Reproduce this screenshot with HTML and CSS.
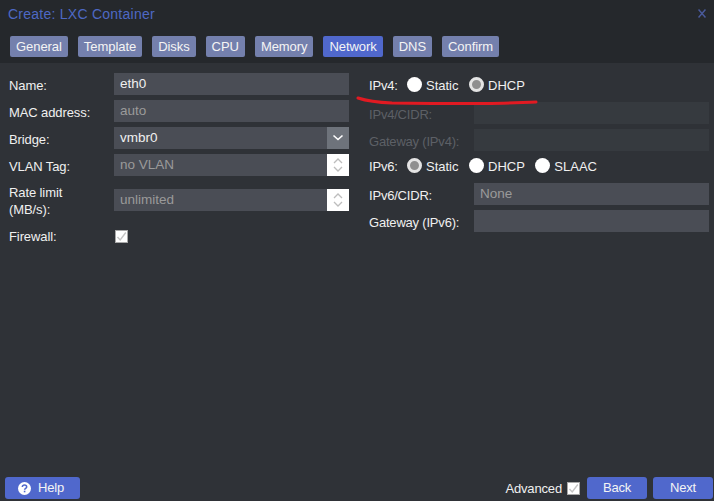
FILE: index.html
```html
<!DOCTYPE html>
<html lang="en">
<head>
<meta charset="utf-8">
<title>Create: LXC Container</title>
<link rel="stylesheet" href="styles.css">
</head>
<body>
<div class="dialog">
  <header class="top">
    <div class="titlebar">
      <span class="title">Create: LXC Container</span>
      <svg class="close" width="8" height="9" viewBox="0 0 8 9"><path d="M0.500 0.500L7.500 8.500M7.500 0.500L0.500 8.500" stroke="#4a5a9c" stroke-width="1.500" fill="none"/></svg>
    </div>
    <nav class="tabs">
      <span class="tab">General</span>
      <span class="tab">Template</span>
      <span class="tab">Disks</span>
      <span class="tab">CPU</span>
      <span class="tab">Memory</span>
      <span class="tab active">Network</span>
      <span class="tab">DNS</span>
      <span class="tab">Confirm</span>
    </nav>
  </header>
  <main class="content">
    <section class="col">
      <div class="row"><label class="lbl">Name:</label><div class="field val">eth0</div></div>
      <div class="row"><label class="lbl">MAC address:</label><div class="field">auto</div></div>
      <div class="row"><label class="lbl">Bridge:</label><div class="combo"><div class="field val">vmbr0</div><span class="trigger dd"><svg width="12" height="8" viewBox="0 0 12 8"><path d="M1.500 1.500L6 5.500L10.500 1.500" stroke="#fff" stroke-width="1.600" fill="none"/></svg></span></div></div>
      <div class="row"><label class="lbl">VLAN Tag:</label><div class="combo"><div class="field">no VLAN</div><span class="trigger spin"><svg width="10" height="18" viewBox="0 0 10 18"><path d="M1 7L5 3L9 7M1 11L5 15L9 11" stroke="#bdbdbd" stroke-width="1.300" fill="none"/></svg></span></div></div>
      <div class="row tall"><label class="lbl">Rate limit<br>(MB/s):</label><div class="combo"><div class="field">unlimited</div><span class="trigger spin"><svg width="10" height="18" viewBox="0 0 10 18"><path d="M1 7L5 3L9 7M1 11L5 15L9 11" stroke="#bdbdbd" stroke-width="1.300" fill="none"/></svg></span></div></div>
      <div class="row"><label class="lbl">Firewall:</label><span class="check"><svg width="11" height="11" viewBox="0 0 11 11"><path d="M1.500 6L4.200 9L9.800 1.500" stroke="#c4c4c4" stroke-width="1.400" fill="none"/></svg></span></div>
    </section>
    <section class="col right">
      <div class="row radios four"><label class="lbl">IPv4:</label><span class="radio"></span><span class="opt">Static</span><span class="radio on"></span><span class="opt">DHCP</span></div>
      <div class="row dis"><label class="lbl">IPv4/CIDR:</label><div class="field"></div></div>
      <div class="row dis"><label class="lbl">Gateway (IPv4):</label><div class="field"></div></div>
      <div class="row radios six"><label class="lbl">IPv6:</label><span class="radio on"></span><span class="opt">Static</span><span class="radio"></span><span class="opt">DHCP</span><span class="radio"></span><span class="opt">SLAAC</span></div>
      <div class="row"><label class="lbl">IPv6/CIDR:</label><div class="field">None</div></div>
      <div class="row"><label class="lbl">Gateway (IPv6):</label><div class="field"></div></div>
    </section>
    <svg class="scribble" width="190" height="12" viewBox="0 0 190 12"><path d="M2 2C14 6 24 6.500 36 7C70 7.500 100 7.500 130 7.500C150 7.500 165 6.500 180 6" stroke="#e11a22" stroke-width="3" stroke-linecap="round" fill="none"/></svg>
  </main>
  <footer class="foot">
    <button class="btn help"><svg width="13" height="13" viewBox="0 0 13 13"><circle cx="6.500" cy="6.500" r="6.500" fill="#fff"/><path d="M4.300 5C4.400 3.700 5.300 3 6.500 3C7.800 3 8.700 3.800 8.700 4.900C8.700 6.300 6.600 6.300 6.600 7.800" stroke="#5068cc" stroke-width="1.500" fill="none"/><rect x="5.800" y="8.700" width="1.600" height="1.600" fill="#5068cc"/></svg>Help</button>
    <span class="spacer"></span>
    <span class="adv">Advanced</span>
    <span class="check small"><svg width="11" height="11" viewBox="0 0 11 11"><path d="M1.500 6L4.200 9L9.800 1.500" stroke="#c4c4c4" stroke-width="1.400" fill="none"/></svg></span>
    <button class="btn nav">Back</button>
    <button class="btn nav">Next</button>
  </footer>
</div>
</body>
</html>
```
FILE: styles.css
```css
* { box-sizing: border-box; }
html, body { margin: 0; padding: 0; }
body { font: 13px/17px "Liberation Sans", Arial, sans-serif; letter-spacing: -0.1px; color: #f0f0f0; background: #2f3237; }
.dialog { width: 714px; height: 501px; display: flex; flex-direction: column; overflow: hidden; }
.top { background: #25282c; height: 63px; flex: none; }
.titlebar { height: 36px; padding: 5px 8px 0 8px; display: flex; justify-content: space-between; align-items: flex-start; }
.title { font-size: 14px; line-height: 18px; color: #4e68c4; letter-spacing: 0.25px; }
.close { margin-top: 4px; }
.tabs { display: flex; gap: 10px; padding-left: 10px; }
.tab { height: 21px; padding: 0 6px; line-height: 21px; background: #7480ad; border-radius: 2px; color: #f4f4f4; letter-spacing: -0.06px; font-size: 13px; }
.tab.active { background: #5068cc; }
.content { flex: 1; position: relative; display: flex; gap: 20px; padding: 10px 5px 0 9px; }
.col { width: 340px; display: flex; flex-direction: column; gap: 5px; }
.row { display: flex; align-items: center; min-height: 22px; }
.lbl { width: 105px; flex: none; padding-top: 2px; }
.right .lbl { letter-spacing: -0.2px; }
.field { flex: 1; height: 22px; line-height: 22px; padding-left: 6px; background: #4a4d55; color: #9a9a9a; font-size: 13.5px; letter-spacing: 0; }
.field.val { color: #f0f0f0; }
.combo { flex: 1; display: flex; height: 22px; }
.trigger { width: 22px; height: 22px; display: flex; align-items: center; justify-content: center; flex: none; }
.dd { background: #6e737b; }
.spin { background: #fff; }
.tall { height: 38px; }
.check { width: 13px; height: 13px; margin: 2px 0 0 1px; background: #fff; border: 1px solid #a8a8a8; display: block; }
.check svg { display: block; }
.right .dis .lbl { color: #5d6066; }
.right .dis .field { background: #363a3f; }
.radios { height: 22px; }
.radios .lbl { width: 38px; }
.four { margin-bottom: 2px; }
.six { margin: -2px 0 2px; }
.radio { width: 15px; height: 15px; border-radius: 50%; background: #fff; flex: none; margin-right: 4px; margin-top: 1px; }
.radio.on { background: #8f8f8f; border: 3px solid #e4e4e4; }
.opt { margin-right: 10.500px; padding-top: 2px; letter-spacing: 0; }
.scribble { position: absolute; left: 356px; top: 33px; }
.foot { height: 24px; flex: none; display: flex; align-items: flex-start; padding: 0 1px 0 5px; }
.btn { height: 22px; border: 0; border-radius: 3px; background: #5068cc; color: #f4f4f4; font: 13px/22px "Liberation Sans", Arial, sans-serif; letter-spacing: -0.2px; padding: 0; display: flex; align-items: center; justify-content: center; }
.help { width: 75px; gap: 7px; padding-right: 3px; }
.nav { width: 60px; margin-left: 6px; }
.spacer { flex: 1; }
.adv { line-height: 22px; margin-right: 5px; padding-top: 1px; letter-spacing: -0.15px; }
.check.small { margin: 5px 1px 0 0; }
```
